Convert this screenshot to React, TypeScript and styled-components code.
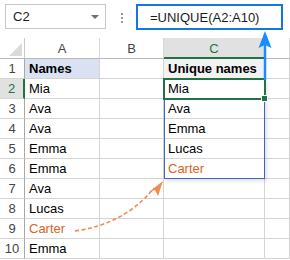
import React from "react";
import styled, { createGlobalStyle } from "styled-components";

const GlobalStyle = createGlobalStyle`
  html, body { margin: 0; padding: 0; background: #ffffff; }
  body { font-family: "Liberation Sans", Arial, sans-serif; }
`;

const Page = styled.div`
  position: relative;
  width: 290px;
  height: 260px;
  overflow: hidden;
  background: #ffffff;
`;

const Toolbar = styled.div`
  height: 38px;
  box-sizing: border-box;
  display: flex;
  align-items: flex-start;
  padding: 4px 0 0 5px;
`;

const NameBox = styled.div`
  width: 101px;
  height: 25px;
  box-sizing: border-box;
  border: 1px solid #c6c6c6;
  display: flex;
  align-items: center;
  justify-content: space-between;
  padding: 0 5px 0 7px;
  font-size: 13px;
  color: #222;
`;

const Caret = styled.span`
  width: 0;
  height: 0;
  border-left: 4px solid transparent;
  border-right: 4px solid transparent;
  border-top: 4px solid #707070;
  margin-right: 1px;
`;

const Dots = styled.div`
  margin-left: 15px;
  margin-top: 9px;
  display: flex;
  flex-direction: column;
  gap: 2px;
`;

const Dot = styled.span`
  width: 2px;
  height: 2px;
  background: #9a9a9a;
`;

const FormulaBar = styled.div`
  margin-left: 13px;
  width: 147px;
  height: 26px;
  box-sizing: border-box;
  border: 2px solid #1675e0;
  display: flex;
  align-items: center;
  padding-left: 12px;
  font-size: 13px;
  color: #1b1b1b;
`;

const Grid = styled.div`
  display: grid;
  grid-template-columns: 25px 75px 64px 101px 25px;
  grid-template-rows: 21px repeat(10, 20px);
`;

const Corner = styled.div`
  position: relative;
  box-sizing: border-box;
  border-right: 1px solid #c8c8c8;
  border-bottom: 1px solid #b8b8b8;
`;

const CornerTri = styled.span`
  position: absolute;
  right: 2px;
  bottom: 2px;
  width: 0;
  height: 0;
  border-left: 13px solid transparent;
  border-bottom: 13px solid #dadada;
`;

const ColHead = styled.div<{ $active?: boolean }>`
  box-sizing: border-box;
  display: flex;
  align-items: center;
  justify-content: center;
  font-size: 13px;
  padding-top: 1px;
  color: ${(p) => (p.$active ? "#217346" : "#444")};
  background: ${(p) => (p.$active ? "#e1e1e1" : "#ffffff")};
  border-right: 1px solid #d8d8d8;
  border-bottom: ${(p) => (p.$active ? "2px solid #217346" : "1px solid #b8b8b8")};
`;

const RowHead = styled.div<{ $active?: boolean }>`
  box-sizing: border-box;
  display: flex;
  align-items: flex-end;
  justify-content: center;
  line-height: 16px;
  font-size: 13px;
  padding-bottom: 1px;
  color: ${(p) => (p.$active ? "#217346" : "#444")};
  background: ${(p) => (p.$active ? "#e1e1e1" : "#ffffff")};
  border-right: ${(p) => (p.$active ? "2px solid #217346" : "1px solid #a8a8a8")};
  border-bottom: 1px solid #d4d4d4;
`;

const Cell = styled.div<{ $bg?: string; $bold?: boolean; $color?: string }>`
  box-sizing: border-box;
  display: flex;
  align-items: flex-end;
  line-height: 16px;
  font-size: 13px;
  padding: 0 0 1px 4px;
  white-space: nowrap;
  overflow: visible;
  font-weight: ${(p) => (p.$bold ? 700 : 400)};
  color: ${(p) => p.$color || "#000"};
  background: ${(p) => p.$bg || "#ffffff"};
  border-right: 1px solid #d4d4d4;
  border-bottom: 1px solid #d4d4d4;
`;

const SpillBox = styled.div`
  position: absolute;
  left: 164px;
  top: 79px;
  width: 101px;
  height: 100px;
  box-sizing: border-box;
  border: 1px solid #3a66c8;
  box-shadow: 2px 2px 4px rgba(0, 0, 0, 0.12);
  pointer-events: none;
`;

const Selection = styled.div`
  position: absolute;
  left: 163px;
  top: 78px;
  width: 103px;
  height: 22px;
  box-sizing: border-box;
  border: 2px solid #217346;
  pointer-events: none;
`;

const FillHandle = styled.span`
  position: absolute;
  right: -4px;
  bottom: -4px;
  width: 5px;
  height: 5px;
  background: #217346;
  border: 1px solid #ffffff;
`;

const Overlay = styled.svg`
  position: absolute;
  left: 0;
  top: 0;
  pointer-events: none;
`;

const ORANGE = "#d9641f";

const names = ["Mia", "Ava", "Ava", "Emma", "Emma", "Ava", "Lucas", "Carter", "Emma"];
const unique = ["Mia", "Ava", "Emma", "Lucas", "Carter"];

export default function App() {
  const rows = [];
  for (let r = 1; r <= 10; r++) {
    const a = r === 1 ? "Names" : names[r - 2];
    const c = r === 1 ? "Unique names" : unique[r - 2] || "";
    rows.push(
      <React.Fragment key={r}>
        <RowHead $active={r === 2}>{r}</RowHead>
        <Cell $bold={r === 1} $bg={r === 1 ? "#d9e1f2" : undefined} $color={a === "Carter" ? ORANGE : undefined}>
          {a}
        </Cell>
        <Cell />
        <Cell $bold={r === 1} $bg={r === 1 ? "#f2f2f2" : undefined} $color={c === "Carter" ? ORANGE : undefined}>
          {c}
        </Cell>
        <Cell />
      </React.Fragment>
    );
  }

  return (
    <>
      <GlobalStyle />
      <Page>
        <Toolbar>
          <NameBox>
            <span>C2</span>
            <Caret />
          </NameBox>
          <Dots>
            <Dot />
            <Dot />
            <Dot />
          </Dots>
          <FormulaBar>=UNIQUE(A2:A10)</FormulaBar>
        </Toolbar>
        <Grid>
          <Corner>
            <CornerTri />
          </Corner>
          <ColHead>A</ColHead>
          <ColHead>B</ColHead>
          <ColHead $active>C</ColHead>
          <ColHead />
          {rows}
        </Grid>
        <SpillBox />
        <Selection>
          <FillHandle />
        </Selection>
        <Overlay width="290" height="260" viewBox="0 0 290 260">
          <path d="M75 231 Q 125 224 154 188" fill="none" stroke="#f5894f" strokeWidth="1.6" strokeDasharray="4 2.5" />
          <path d="M163 181 L158 196 L155 190 L149 192 Z" fill="#f5894f" />
          <line x1="265" y1="44" x2="265" y2="80" stroke="#1a8cff" strokeWidth="2.5" />
          <path d="M265 31 L271.5 48 L265 45 L258.5 48 Z" fill="#1a8cff" />
        </Overlay>
      </Page>
    </>
  );
}
